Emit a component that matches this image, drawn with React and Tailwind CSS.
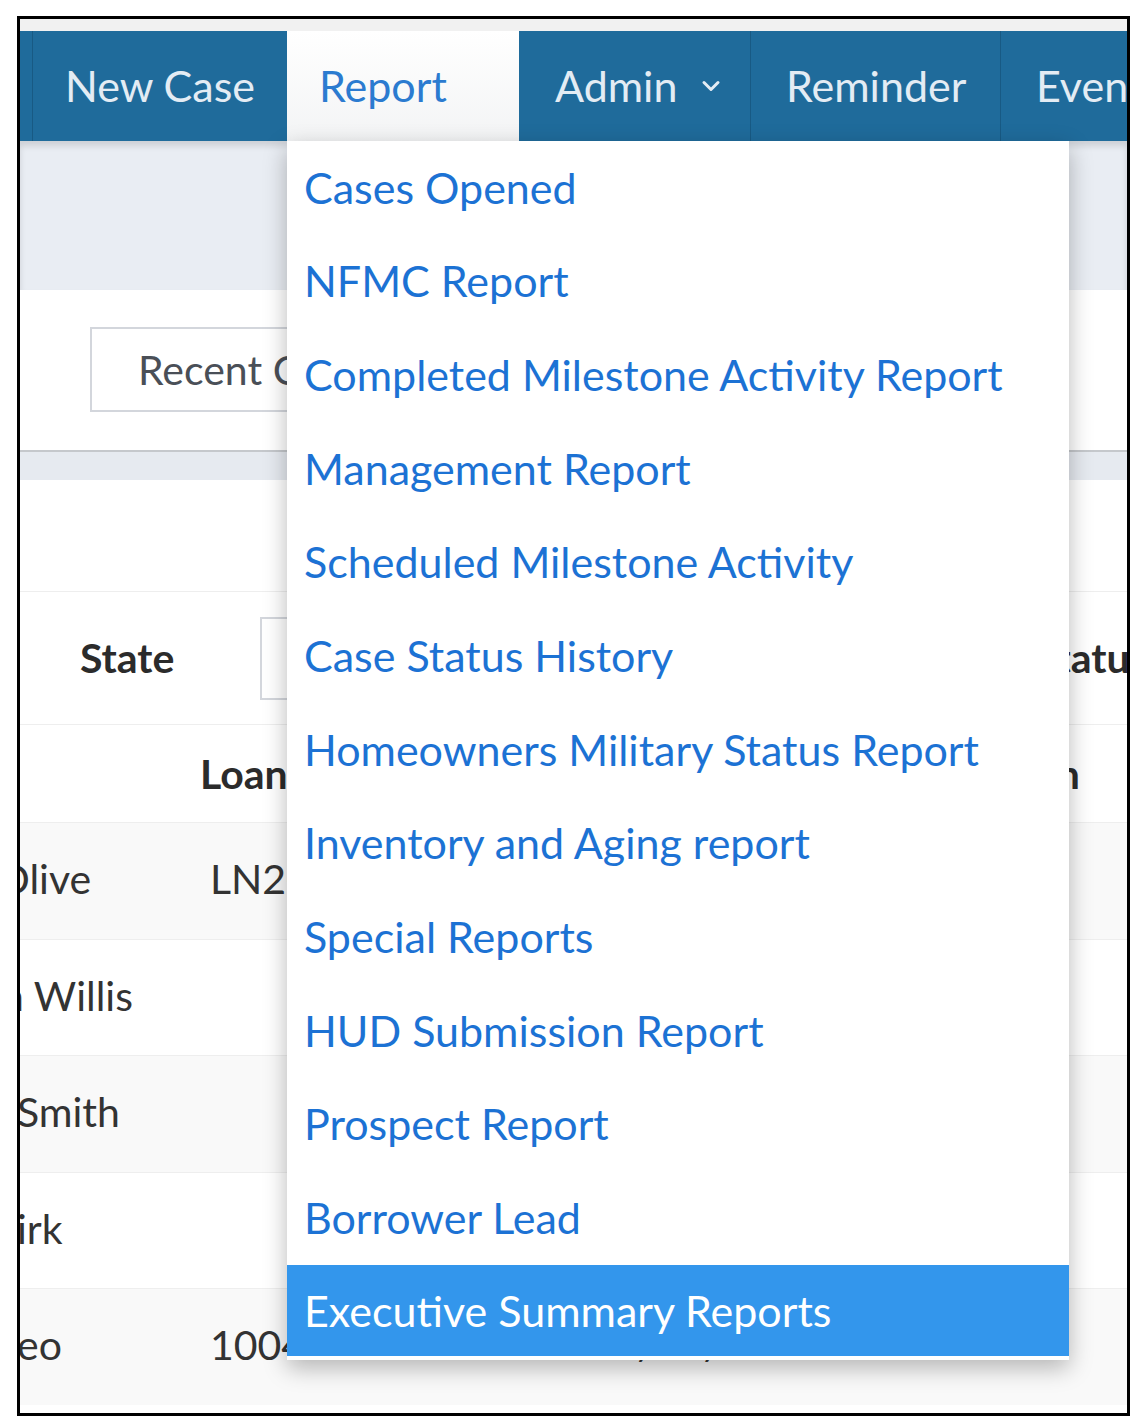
import React from 'react';
import { ChevronDown } from 'lucide-react';

const reports = [
  'Cases Opened',
  'NFMC Report',
  'Completed Milestone Activity Report',
  'Management Report',
  'Scheduled Milestone Activity',
  'Case Status History',
  'Homeowners Military Status Report',
  'Inventory and Aging report',
  'Special Reports',
  'HUD Submission Report',
  'Prospect Report',
  'Borrower Lead',
  'Executive Summary Reports',
];

// table is scrolled sideways, so the name column starts off the left edge
const rows = [
  { name: 'Olive', cls: '-ml-[23px]', loan: 'LN2023-0417', date: '', bg: 'bg-[#f9f9f9]' },
  { name: 'n Willis', cls: '-ml-[19px]', loan: '', date: '', bg: 'bg-white' },
  { name: 'Smith', cls: '-ml-[3px]', loan: '', date: '', bg: 'bg-[#f9f9f9]' },
  { name: 'irk', cls: '-ml-[3px]', loan: '', date: '', bg: 'bg-white' },
  { name: 'eo', cls: '-ml-[3px]', loan: '1004587', date: '10/12/2023', bg: 'bg-[#f9f9f9]' },
];

const App = () => {
  return (
    <div className="w-full h-[1428px] bg-white pt-[16px] pl-[17px] font-['Lato',sans-serif]">
      <div className="w-[1113px] h-[1400px] border-[3px] border-black overflow-hidden bg-white">
        <div className="h-[12px] bg-[#f1f1f1]" />

        {/* top nav */}
        <div className="relative h-[110px] bg-[#1f6b9b] flex text-[43px] text-[#e3ecf4] z-20">
          <div className="w-[12px] shrink-0" />
          <div className="w-[255px] shrink-0 border-l border-[#185a84] flex items-center justify-center">New Case</div>
          <div className="w-[232px] shrink-0 bg-gradient-to-b from-white to-[#f3f4f5] flex items-center pl-[32px] text-[#2b7bd0]">Report</div>
          <div className="w-[231px] shrink-0 flex items-center pl-[36px]">
            Admin
            <ChevronDown className="ml-[20px] w-[28px] h-[28px]" strokeWidth={2.6} />
          </div>
          <div className="w-[250px] shrink-0 border-l border-[#185a84] flex items-center pl-[35px]">Reminder</div>
          <div className="flex-1 min-w-0 border-l border-[#185a84] flex items-center pl-[35px] whitespace-nowrap">Events</div>

          <div className="absolute top-full left-[267px] w-[782px] bg-white pb-[4px] shadow-[0_8px_22px_rgba(0,0,0,0.28)]">
            {reports.map((r, i) => (
              <div
                key={r}
                className={
                  i === reports.length - 1
                    ? 'h-[91px] flex items-center pl-[17px] text-[43px] bg-[#3396ec] text-white whitespace-nowrap'
                    : 'h-[93.7px] flex items-center pl-[17px] text-[43px] text-[#1c72d4] whitespace-nowrap'
                }
              >
                {r}
              </div>
            ))}
          </div>
        </div>

        {/* page behind the menu */}
        <div className="h-[149px] bg-[#e9edf3] shadow-[inset_0_5px_6px_rgba(0,0,0,0.12)]" />
        <div className="h-[160px] bg-white pt-[37px] pl-[70px]">
          <div className="w-[360px] h-[85px] border-2 border-[#d3d6dc] flex items-center pl-[46px] text-[41px] text-[#4a4f57] whitespace-nowrap">
            Recent Cases
          </div>
        </div>
        <div className="h-[30px] bg-[#e6eaf0] border-t-2 border-[#c5c8cc]" />
        <div className="h-[112px] bg-white border-b border-[#eeeeee]" />

        <div className="h-[133px] bg-white flex items-center border-b border-[#eeeeee] text-[41px] text-[#2b2b2b]">
          <div className="w-[240px] shrink-0 pl-[60px] font-bold">State</div>
          <div className="w-[500px] shrink-0 h-[83px] border-2 border-[#d3d6dc]" />
          <div className="ml-[274px] font-bold whitespace-nowrap">Status</div>
        </div>

        <div className="h-[97px] bg-white flex items-center text-[41px] font-bold text-[#2b2b2b]">
          <div className="w-[180px] shrink-0" />
          <div className="w-[500px] shrink-0 whitespace-nowrap">Loan Number</div>
          <div className="flex-1 text-right pr-[47px]">Action</div>
        </div>

        {rows.map((row, i) => (
          <div
            key={i}
            className={`h-[116.6px] flex items-center pb-[4px] border-t border-[#eeeeee] text-[41px] text-[#333333] ${row.bg}`}
          >
            <div className="w-[190px] shrink-0 whitespace-nowrap">
              <div className={row.cls}>{row.name}</div>
            </div>
            <div className="w-[380px] shrink-0 whitespace-nowrap">{row.loan}</div>
            <div className="whitespace-nowrap">{row.date}</div>
          </div>
        ))}
      </div>
    </div>
  );
};

export default App;
